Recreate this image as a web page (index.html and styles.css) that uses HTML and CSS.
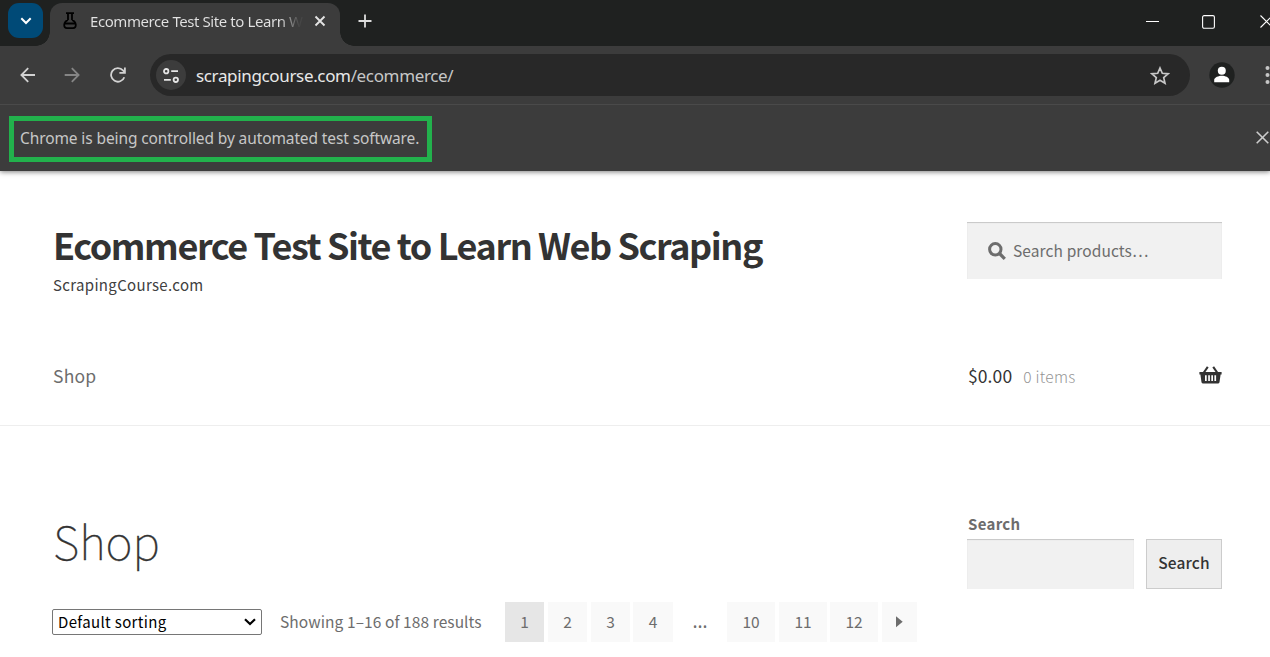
FILE: index.html
```html
<!DOCTYPE html>
<html lang="en">
<head>
<meta charset="utf-8">
<title>Ecommerce Test Site to Learn Web Scraping</title>
<link rel="stylesheet" href="styles.css">
</head>
<body>
<div class="browser">
  <div class="tabstrip">
    <div class="tab-search"><svg width="35" height="35" viewBox="0 0 35 35"><path d="M13.3 15.300l4.700 4.700 4.700-4.700" fill="none" stroke="#fff" stroke-width="2"/></svg></div>
    <div class="tab">
      <svg class="flask" width="14" height="18" viewBox="0 0 14 18"><path d="M3 1.200h8M5 1.500v6.500M9 1.500v6.500M5 8C.5 9.500-.2 16.200 4 16.200h6C14.200 16.200 13.500 9.500 9 8M2 11.500h10" fill="none" stroke="#000" stroke-width="1.800"/></svg>
      <span class="tab-title">Ecommerce Test Site to Learn W</span>
      <svg class="tab-close" width="12" height="12" viewBox="0 0 12 12"><path d="M1.5 1.5l9 9M10.5 1.5l-9 9" stroke="#e3e3e3" stroke-width="1.9"/></svg>
    </div>
    <svg class="new-tab" width="14" height="14" viewBox="0 0 14 14"><path d="M7 .5v13M.5 7h13" stroke="#ddd" stroke-width="1.8"/></svg>
    <div class="window-buttons">
      <svg width="13" height="13" viewBox="0 0 13 13"><path d="M0 6.5h13" stroke="#fff"/></svg>
      <svg width="13" height="14" viewBox="0 0 13 14"><rect x=".6" y=".6" width="11.8" height="12.6" rx="1.5" fill="none" stroke="#fff" stroke-width="1.1"/></svg>
      <svg class="window-close" width="13" height="13" viewBox="0 0 13 13"><path d="M.5 .5l12 12M12.5 .5l-12 12" stroke="#fff" stroke-width="1.1"/></svg>
    </div>
  </div>
  <div class="toolbar">
    <svg class="nav-icon" width="16" height="16" viewBox="0 0 16 16"><path d="M15 8H2M8.2 1.200L1.400 8l6.800 6.800" fill="none" stroke="#d2d2d2" stroke-width="1.8"/></svg>
    <svg class="nav-icon forward" width="16" height="16" viewBox="0 0 16 16"><path d="M.7 8H14M7.800 1.200L14.600 8l-6.800 6.800" fill="none" stroke="#858585" stroke-width="1.8"/></svg>
    <svg class="nav-icon reload" width="16" height="16" viewBox="0 0 16 16"><path d="M14.300 10.200A6.800 6.800 0 1 1 13 3.400l1.600 1.800M14.900.4v5.400H9.400" fill="none" stroke="#d2d2d2" stroke-width="1.8"/></svg>
    <div class="omnibox">
      <div class="site-info"><svg width="16" height="15" viewBox="0 0 16 15" fill="none" stroke="#e6e6e6" stroke-width="1.8"><circle cx="3.2" cy="3.2" r="2.2"/><path d="M8.2 3.2h6.800M1 11.800h6.800"/><circle cx="12.8" cy="11.8" r="2.2"/></svg></div>
      <span class="url">scrapingcourse.com<span class="path">/ecommerce/</span></span>
      <svg class="star" width="20" height="19" viewBox="0 0 20 19"><path d="M10 2l2.300 5.300 5.800.5-4.400 3.800 1.300 5.600-5-3-5 3 1.300-5.600L1.900 7.800l5.800-.5z" fill="none" stroke="#c7c7c7" stroke-width="1.7"/></svg>
    </div>
    <svg class="avatar" width="26" height="26" viewBox="0 0 26 26"><circle cx="13" cy="13" r="12.7" fill="#1f2120"/><circle cx="12.8" cy="8.8" r="4" fill="#fff"/><path d="M5.200 20.200v-2.400c0-2.500 4.500-4.100 7.700-4.100s7.300 1.600 7.300 4.100v2.400z" fill="#fff"/></svg>
    <svg class="kebab" width="5" height="20" viewBox="0 0 5 20" fill="#c7c7c7"><circle cx="2.5" cy="3" r="2"/><circle cx="2.5" cy="10" r="2"/><circle cx="2.5" cy="17" r="2"/></svg>
  </div>
  <div class="infobar">
    <div class="notice"><span class="notice-text">Chrome is being controlled by automated test software.</span></div>
    <svg class="info-close" width="13" height="13" viewBox="0 0 13 13"><path d="M.7 .7l11.600 11.600M12.300 .7L.7 12.300" stroke="#ccc" stroke-width="1.6"/></svg>
  </div>
</div>
<div class="page">
  <header class="site-header">
    <div class="branding">
      <div><h1 class="site-title">Ecommerce Test Site to Learn Web Scraping</h1>
      <p class="tagline">ScrapingCourse.com</p></div>
      <div class="product-search"><svg width="18" height="18" viewBox="0 0 18 18" fill="none" stroke="#6d6d6d"><circle cx="7.3" cy="7.3" r="5.7" stroke-width="3"/><path d="M11.500 11.500l5.300 5.300" stroke-width="3.2"/></svg><span class="placeholder">Search products…</span></div>
    </div>
    <div class="menu">
      <span class="menu-link">Shop</span>
      <div class="cart"><span class="amount">$0.00</span><span class="count">0 items</span>
      <svg class="basket" width="23" height="18" viewBox="0 0 23 18"><path d="M4.500 7l4.300-6.200M18.500 7L14.200.8" stroke="#333" stroke-width="2.1" fill="none"/><path d="M.4 6h22.200v2.400h-1l-1.100 7.800q-.3 1.300-1.600 1.300H4.100q-1.300 0-1.600-1.300L1.400 8.400H.4zM6 9.300v5.700h1.700V9.300zM9.200 9.300v5.700h1.700V9.300zM12.300 9.300v5.700H14V9.300zM15.400 9.300v5.700h1.700V9.300z" fill="#333" fill-rule="evenodd"/></svg></div>
    </div>
  </header>
  <main class="content">
    <section class="shop">
      <h2 class="shop-title">Shop</h2>
      <div class="sorting">
        <div class="select"><span class="select-text">Default sorting</span><svg width="12" height="8" viewBox="0 0 12 8"><path d="M1 1.300l5 4.800 5-4.800" fill="none" stroke="#000" stroke-width="2.200"/></svg></div>
        <span class="results">Showing 1–16 of 188 results</span>
        <nav class="pages"><span class="pg current">1</span><span class="pg">2</span><span class="pg">3</span><span class="pg four">4</span><span class="dots">…</span><span class="pg wide">10</span><span class="pg wide">11</span><span class="pg wide last">12</span><span class="pg next"><svg width="7" height="12" viewBox="0 0 7 12"><path d="M0 .3L6.700 5.800 0 11.300z" fill="#6d6d6d"/></svg></span></nav>
      </div>
    </section>
    <aside class="sidebar">
      <div class="label">Search</div>
      <div class="search-row"><div class="field"></div><div class="button">Search</div></div>
    </aside>
  </main>
</div>
</body>
</html>
```
FILE: styles.css
```css
* { box-sizing: border-box; }
body { margin: 0; width: 1270px; height: 657px; overflow: hidden; background: #fff; color: #6d6d6d; font-family: "Noto Sans CJK JP", "Noto Sans CJK SC", sans-serif; white-space: nowrap; }
svg { display: block; flex: none; }
h1, h2, p { margin: 0; }
.browser { height: 171px; background: #3c3c3c; box-shadow: 0 1px 5px rgba(0,0,0,.5); font-family: "Noto Sans", sans-serif; position: relative; }
.tabstrip { height: 46px; background: #1f2120; display: flex; align-items: flex-start; }
.tab-search { width: 35px; height: 35px; margin: 3px 7px 0 8px; border-radius: 11px; background: #004a77; flex: none; }
.tab { position: relative; width: 290px; height: 43px; margin-top: 3px; border-radius: 12px 12px 0 0; background: #3c3c3c; display: flex; flex: none; }
.tab::before, .tab::after { content: ""; position: absolute; bottom: 0; width: 14px; height: 14px; }
.tab::before { left: -14px; background: radial-gradient(circle at 0 0, transparent 13.5px, #3c3c3c 14px); }
.tab::after { right: -14px; background: radial-gradient(circle at 100% 0, transparent 13.5px, #3c3c3c 14px); }
.flask { margin: 9px 13px 0 13px; }
.tab-title { width: 217px; height: 30px; font-size: 15px; line-height: 22px; padding-top: 7px; letter-spacing: -.42px; color: transparent; background: linear-gradient(90deg, #e3e3e3 190px, #464646 209px); background-clip: text; }
.tab-close { margin: 12px 0 0 7px; }
.new-tab { margin: 14px 0 0 18px; }
.window-buttons { display: flex; gap: 43px; margin: 15px -3px 0 auto; }
.window-close { margin-left: 2px; }
.toolbar { height: 58px; display: flex; align-items: center; padding-left: 20px; }
.forward { margin-left: 28px; }
.reload { margin-left: 30px; }
.omnibox { margin-left: 24px; width: 1040px; height: 42px; border-radius: 21px; background: #282828; display: flex; align-items: center; padding: 0 20px 0 6px; flex: none; }
.site-info { width: 30px; height: 30px; border-radius: 15px; background: #3c3c3c; display: grid; place-items: center; }
.url { margin-left: 10px; font-size: 17px; letter-spacing: -.35px; color: #e8e8e8; }
.path { color: #c7c7c7; }
.star { margin-left: auto; }
.avatar { margin-left: 19px; }
.kebab { margin-left: 30px; }
.infobar { height: 67px; border-top: 1px solid #4a4a4a; display: flex; align-items: flex-start; padding: 11px 0 0 9px; }
.notice { width: 423px; height: 46px; border: 5px solid #22b14c; padding-left: 6px; font-size: 15.5px; letter-spacing: -.11px; line-height: 35px; color: #c7c7c7; }
.info-close { margin: 15px 0 0 824px; }
.site-header { height: 255px; border-bottom: 1px solid #eee; padding: 51px 48px 0 53px; }
.branding { display: flex; justify-content: space-between; height: 119px; }
.site-title { font-size: 36px; line-height: 50px; margin-top: -3px; font-weight: 700; color: #333; letter-spacing: -1.43px; }
.tagline { font-size: 15px; letter-spacing: .33px; line-height: 24px; color: #404040; margin-top: 4px; }
.product-search { width: 255px; height: 57px; background: #f1f1f1; box-shadow: inset 0 1px 1px rgba(0,0,0,.18); display: flex; align-items: center; padding-left: 21px; }
.placeholder { margin: -2px 0 0 7px; font-size: 15.5px; letter-spacing: .1px; }
.menu { display: flex; justify-content: space-between; height: 68px; align-items: center; }
.menu-link { font-size: 17.5px; letter-spacing: .2px; }
.cart { width: 255px; display: flex; align-items: center; }
.amount { margin-left: 1px; color: #333; font-size: 17.5px; letter-spacing: .1px; }
.count { margin: 1px 0 0 11px; font-size: 15.5px; letter-spacing: .3px; color: #949494; font-weight: 300; }
.basket { margin-left: auto; }
.content { display: flex; justify-content: space-between; padding: 81px 48px 0 53px; }
.shop-title { font-size: 46px; line-height: 66px; font-weight: 100; color: #333; -webkit-text-stroke: .3px #333; }
.sorting { display: flex; align-items: center; margin-top: 29px; height: 40px; }
.select { width: 210px; height: 26px; margin-left: -1px; border: 1px solid #767676; border-radius: 2px; display: flex; justify-content: space-between; align-items: center; padding: 0 5px; color: #000; font-size: 15px; letter-spacing: .35px; line-height: 24px; }
.results { margin: -2px 0 0 18px; width: 225px; font-size: 15.5px; letter-spacing: .08px; }
.pages { display: flex; gap: 4px; font-size: 15.5px; line-height: 38px; text-align: center; }
.pg { width: 39px; height: 40px; background: #f9f9f9; }
.current { background: #e6e6e6; }
.four { width: 40px; margin-left: -1px; }
.dots { width: 46px; font-family: "Noto Sans", sans-serif; font-size: 19px; }
.wide { width: 48px; }
.last { margin-left: -1px; }
.next { width: 35px; display: grid; place-items: center; padding-right: 1px; }
.sidebar { width: 255px; padding-top: 4px; }
.label { margin-left: 1px; font-size: 15px; letter-spacing: .3px; line-height: 26px; font-weight: 700; height: 28px; }
.search-row { display: flex; justify-content: space-between; }
.field { width: 167px; height: 50px; background: #f1f1f1; box-shadow: inset 0 1px 1px rgba(0,0,0,.18); }
.button { width: 76px; height: 50px; border: 1px solid #ccc; background: #eee; color: #333; font-size: 15.5px; letter-spacing: .15px; font-weight: 500; line-height: 45px; text-align: center; }
```
